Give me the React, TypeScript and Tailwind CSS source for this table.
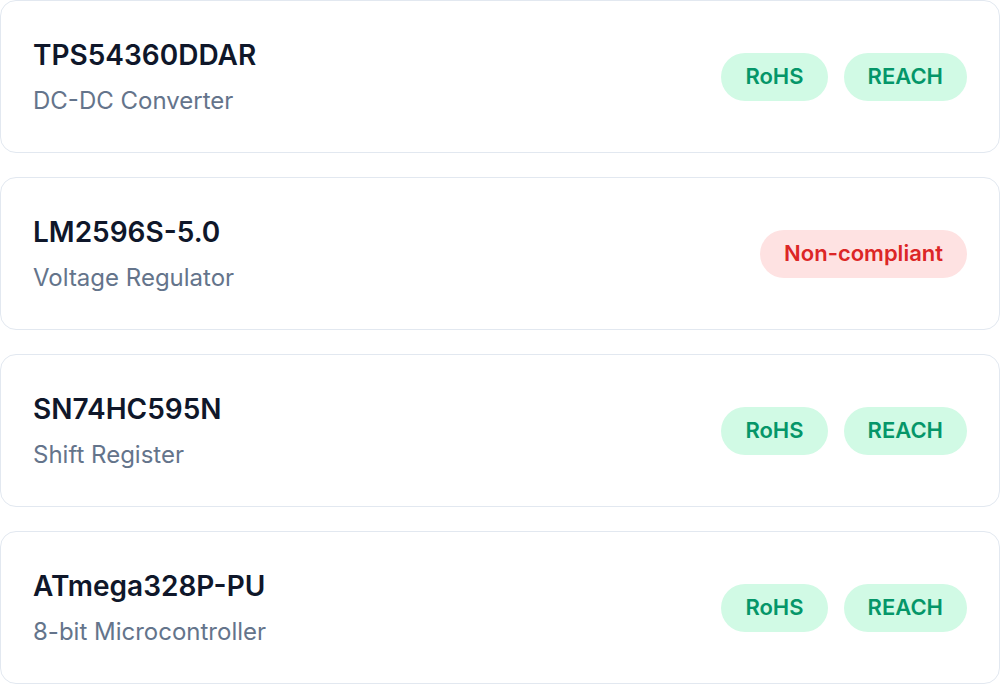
import React from "react";

type Part = {
  mpn: string;
  desc: string;
  compliant: boolean;
};

const parts: Part[] = [
  { mpn: "TPS54360DDAR", desc: "DC-DC Converter", compliant: true },
  { mpn: "LM2596S-5.0", desc: "Voltage Regulator", compliant: false },
  { mpn: "SN74HC595N", desc: "Shift Register", compliant: true },
  { mpn: "ATmega328P-PU", desc: "8-bit Microcontroller", compliant: true },
];

function Badge({ label, tone }: { label: string; tone: "ok" | "bad" }) {
  const cls =
    tone === "ok"
      ? "bg-[#d1fae5] text-[#059669]"
      : "bg-[#fee2e2] text-[#dc2626]";
  return (
    <span
      className={`inline-flex h-12 items-center rounded-full px-6 text-[22px] font-semibold ${cls}`}
    >
      {label}
    </span>
  );
}

export default function App() {
  return (
    <div
      className="flex w-[1000px] flex-col gap-6 bg-white"
      style={{ fontFamily: "Inter, 'Noto Sans', sans-serif" }}
    >
      {parts.map((p) => (
        <div
          key={p.mpn}
          className="flex h-[153px] items-center justify-between rounded-2xl border border-[#e2e8f0] bg-white px-8"
        >
          <div className="flex flex-col gap-3">
            <span className="text-[28px] font-semibold leading-9 text-[#0f172a]">
              {p.mpn}
            </span>
            <span className="text-[24px] leading-8 text-[#64748b]">{p.desc}</span>
          </div>
          <div className="flex items-center gap-4">
            {p.compliant ? (
              <>
                <Badge label="RoHS" tone="ok" />
                <Badge label="REACH" tone="ok" />
              </>
            ) : (
              <Badge label="Non-compliant" tone="bad" />
            )}
          </div>
        </div>
      ))}
    </div>
  );
}
